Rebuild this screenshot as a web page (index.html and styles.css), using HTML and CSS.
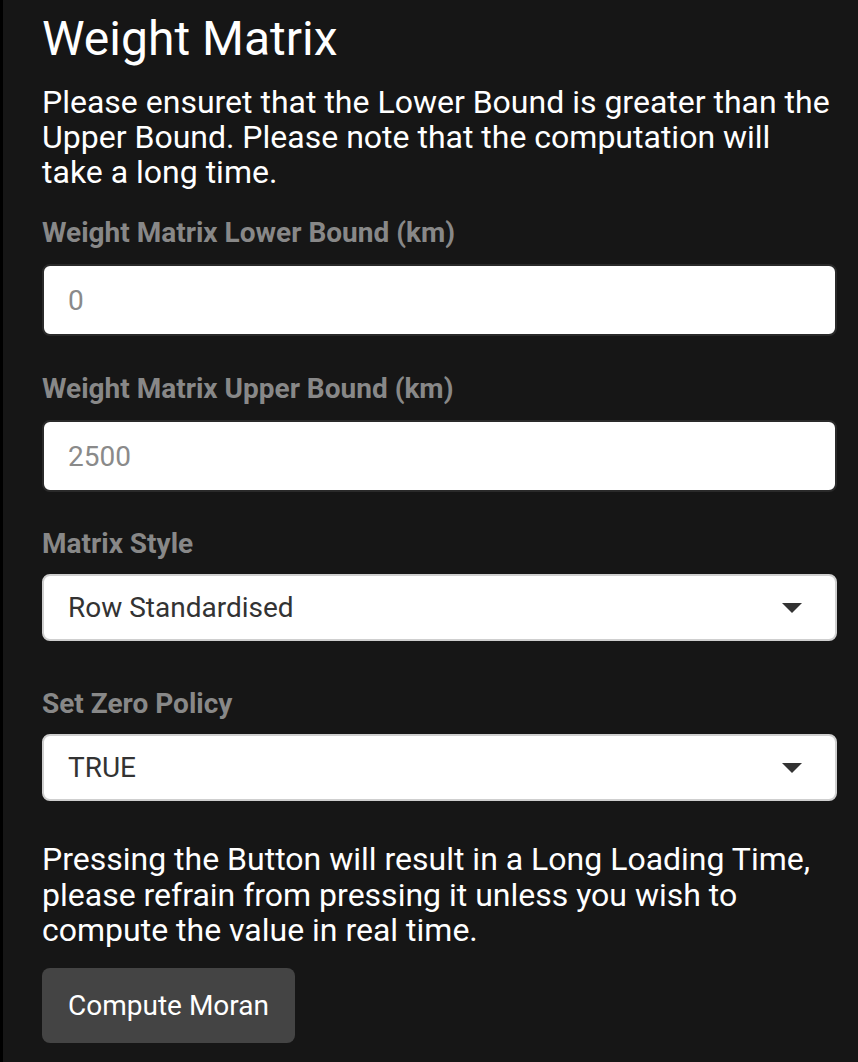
FILE: index.html
```html
<!DOCTYPE html>
<html>
<head>
<meta charset="utf-8">
<link rel="stylesheet" href="styles.css">
</head>
<body>
<div class="panel">
  <h3 class="title">Weight Matrix</h3>
  <p class="text">Please ensuret that the Lower Bound is greater than the Upper Bound. Please note that the computation will take a long time.</p>

  <div class="group group-input">
    <label class="label">Weight Matrix Lower Bound (km)</label>
    <input class="field" type="text" value="0">
  </div>

  <div class="group group-input">
    <label class="label">Weight Matrix Upper Bound (km)</label>
    <input class="field" type="text" value="2500">
  </div>

  <div class="group group-select">
    <label class="label">Matrix Style</label>
    <div class="select"><span class="select-value">Row Standardised</span><span class="caret"></span></div>
  </div>

  <div class="group group-select">
    <label class="label">Set Zero Policy</label>
    <div class="select"><span class="select-value">TRUE</span><span class="caret"></span></div>
  </div>

  <p class="text text-bottom">Pressing the Button will result in a Long Loading Time, please refrain from pressing it unless you wish to compute the value in real time.</p>

  <button class="btn">Compute Moran</button>
</div>
</body>
</html>
```

FILE: styles.css
```css
html, body {
  margin: 0;
  padding: 0;
  background: #161616;
}

body {
  font-family: Roboto, "Liberation Sans", sans-serif;
  color: #fff;
}

.panel {
  border-left: 3px solid #000;
  padding: 13px 21px 0 39px;
  min-height: 1062px;
  box-sizing: border-box;
}

.title {
  margin: 0 0 19px 0;
  font-size: 48px;
  line-height: 52.8px;
  font-weight: 400;
}

.text {
  margin: 0;
  font-size: 32px;
  line-height: 35.2px;
}

.group {
  display: flex;
  flex-direction: column;
}

.group-input {
  margin-top: 25px;
}

.group-input + .group-input {
  margin-top: 35px;
}

.group-input + .group-select {
  margin-top: 34px;
}

.group-select + .group-select {
  margin-top: 45px;
}

.label {
  font-size: 28px;
  line-height: 35px;
  font-weight: 700;
  color: #888;
  margin-bottom: 14px;
}

.group-select .label {
  margin-bottom: 13px;
}

.field {
  height: 72px;
  box-sizing: border-box;
  border: 2px solid #2a2a2a;
  border-radius: 8px;
  background: #fff;
  padding: 0 24px;
  font-family: Roboto, "Liberation Sans", sans-serif;
  font-size: 28px;
  color: #8a8a8a;
  outline: none;
  margin: 0;
  width: 100%;
}

.select {
  height: 67px;
  box-sizing: border-box;
  border: 2px solid #cfcfcf;
  border-radius: 8px;
  background: #fff;
  padding: 0 33px 0 24px;
  display: flex;
  align-items: center;
  justify-content: space-between;
  font-size: 28px;
  color: #333;
}

.caret {
  width: 0;
  height: 0;
  border-left: 10px solid transparent;
  border-right: 10px solid transparent;
  border-top: 10px solid #333;
}

.text-bottom {
  margin-top: 41px;
}

.btn {
  margin-top: 20px;
  width: 253px;
  height: 75px;
  border: none;
  border-radius: 8px;
  background: #444;
  color: #fff;
  font-family: Roboto, "Liberation Sans", sans-serif;
  font-size: 28px;
  padding: 0;
  display: block;
}
```
